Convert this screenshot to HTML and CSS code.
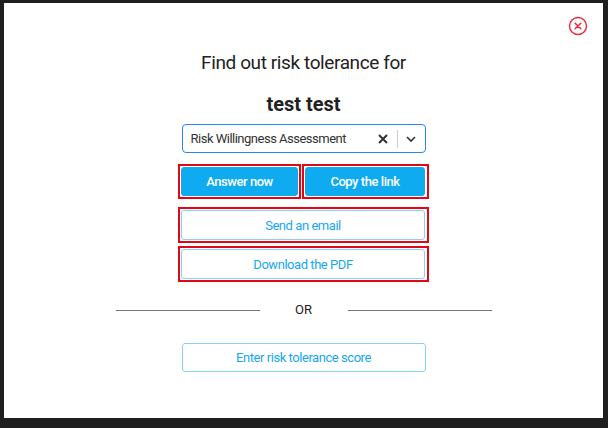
FILE: index.html
```html
<html>
<head>
    <meta name="viewport" content="width=device-width, initial-scale=1.0">
    <title>Risk tolerance</title>
    <link rel="stylesheet" href="styles.css">
</head>
<body>
<div class="modal">
    <button class="close" aria-label="Close">
        <svg width="20" height="20" viewBox="0 0 20 20">
            <circle cx="10" cy="10" r="8.5" fill="none" stroke="#e8283a" stroke-width="1.4"/>
            <path d="M7.2 7.2 L12.8 12.8 M12.8 7.2 L7.2 12.8" stroke="#e8283a" stroke-width="1.5" stroke-linecap="round"/>
        </svg>
    </button>
    <h2 class="title">Find out risk tolerance for</h2>
    <h1 class="client">test test</h1>
    <div class="select">
        <span class="select-value">Risk Willingness Assessment</span>
        <span class="select-clear">
            <svg width="12" height="12" viewBox="0 0 12 12">
                <path d="M2 2 L10 10 M10 2 L2 10" stroke="#333" stroke-width="2"/>
            </svg>
        </span>
        <span class="select-sep"></span>
        <span class="select-arrow">
            <svg width="12" height="12" viewBox="0 0 12 12">
                <path d="M2 4 L6 8 L10 4" fill="none" stroke="#333" stroke-width="1.6"/>
            </svg>
        </span>
    </div>
    <div class="row">
        <div class="mark mark-left"><button class="btn btn-primary">Answer now</button></div>
        <div class="mark mark-right"><button class="btn btn-primary">Copy the link</button></div>
    </div>
    <div class="mark mark-wide first"><button class="btn btn-outline">Send an email</button></div>
    <div class="mark mark-wide second"><button class="btn btn-outline">Download the PDF</button></div>
    <div class="divider">
        <span class="line"></span>
        <span class="or">OR</span>
        <span class="line"></span>
    </div>
    <button class="btn btn-outline btn-score">Enter risk tolerance score</button>
</div>
</body>
</html>
```

FILE: styles.css
```css
/* Page backdrop */
body {
    margin: 0;
    padding: 3px 0 0 4px;
    background: #1f1f1f;
    font-family: 'Roboto', 'Liberation Sans', sans-serif;
}
/* Modal box */
.modal {
    position: relative;
    width: 599px;
    height: 415px;
    background: #fff;
    box-sizing: border-box;
    padding-top: 48px;
    display: flex;
    flex-direction: column;
    align-items: center;
}
.close {
    position: absolute;
    top: 13px;
    right: 15px;
    width: 20px;
    height: 20px;
    padding: 0;
    border: none;
    background: none;
    cursor: pointer;
}
.close svg {
    display: block;
}
/* Headings */
.title {
    margin: 0;
    font-size: 19px;
    line-height: 24px;
    letter-spacing: -0.4px;
    font-weight: 400;
    color: #222;
}
.client {
    margin: 17px 0 0;
    font-size: 20px;
    line-height: 24px;
    font-weight: 700;
    color: #222;
}
/* Select box */
.select {
    margin-top: 8px;
    width: 244px;
    height: 29px;
    box-sizing: border-box;
    border: 1.5px solid #2684ff;
    border-radius: 4px;
    display: flex;
    align-items: center;
    padding-left: 8px;
    color: #333;
    font-size: 13px;
    letter-spacing: -0.5px;
}
.select-value {
    flex: 1;
}
.select-clear,
.select-arrow {
    display: flex;
    align-items: center;
}
.select-clear {
    margin-right: 8px;
}
.select-sep {
    width: 1px;
    height: 18px;
    background: #ccc;
    margin-right: 7px;
}
.select-arrow {
    margin-right: 8px;
}
/* Red highlight frames */
.mark {
    box-sizing: border-box;
    border: 2px solid #e30613;
    padding: 1px;
    display: flex;
}
.row {
    margin-top: 11px;
    display: flex;
    gap: 1px;
}
.mark-left {
    width: 123px;
    padding-right: 1px;
}
.mark-right {
    width: 127px;
    padding-left: 1px;
    padding-right: 2px;
}
.mark-wide {
    width: 251px;
    padding-right: 2px;
}
.mark-wide.first {
    margin-top: 8px;
}
.mark-wide.second {
    margin-top: 3px;
}
/* Buttons */
.btn {
    flex: 1;
    height: 30px;
    box-sizing: border-box;
    border-radius: 3px;
    font-family: 'Roboto', 'Liberation Sans', sans-serif;
    font-size: 13px;
    letter-spacing: -0.45px;
    cursor: pointer;
}
.btn-primary {
    height: 29px;
    background: #0eabf1;
    border: 1px solid #0eabf1;
    color: #fff;
    font-weight: 500;
}
.btn-outline {
    background: #fff;
    border: 1px solid #86d2f6;
    color: #17a7ef;
}
/* OR divider */
.divider {
    margin-top: 20px;
    display: flex;
    align-items: center;
    width: 376px;
}
.line {
    flex: 1;
    height: 1px;
    background: #777;
}
.or {
    width: 88px;
    text-align: center;
    font-size: 13px;
    line-height: 16px;
    color: #222;
}
.btn-score {
    flex: none;
    margin-top: 25px;
    width: 244px;
    height: 29px;
}
```
